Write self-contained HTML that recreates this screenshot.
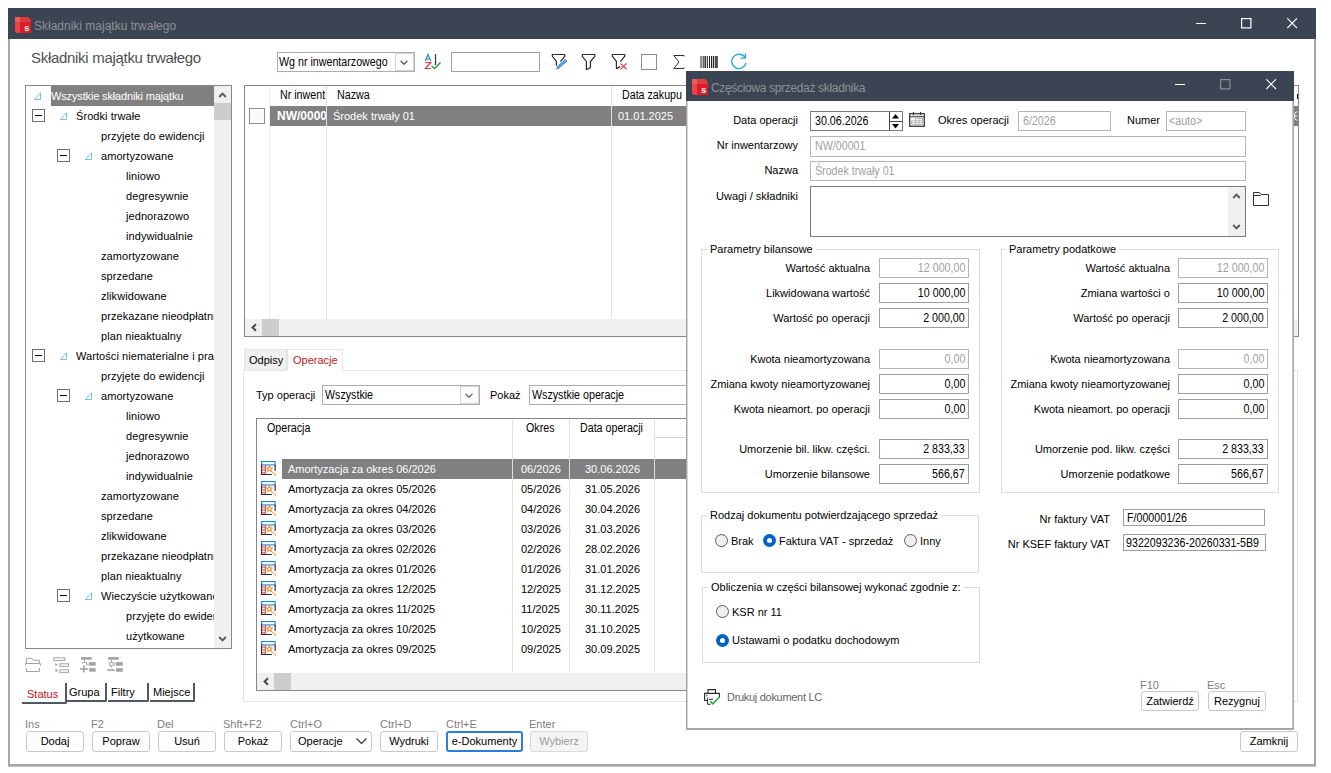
<!DOCTYPE html>
<html><head><meta charset="utf-8">
<style>
*{box-sizing:border-box;margin:0;padding:0}
html,body{width:1331px;height:773px;overflow:hidden;background:#fff;font-family:"Liberation Sans",sans-serif;font-size:11px;color:#000}
.a{position:absolute}
.t{position:absolute;white-space:nowrap;line-height:20px;height:20px}
.win{position:absolute;left:8px;top:8px;width:1308px;height:758px;background:#fff;border:2px solid #a6a6a6;border-top:none;box-shadow:0 1px 0 #c4c4c4}
.tb{position:absolute;background:#3a4452}
.ttl{position:absolute;color:#8f9194;font-size:12px;line-height:30px;white-space:nowrap;letter-spacing:-0.33px}
.logo{position:absolute;width:16px;height:16px;background:#e3262e;border-radius:0 3px 0 3px;overflow:hidden}
.logo:before{content:"";position:absolute;left:0;top:0;width:8px;height:16px;background:#ea4a50}
.logo:after{content:"";position:absolute;left:0;top:0;width:16px;height:8px;background:rgba(255,255,255,.12)}
.logo b{position:absolute;left:7px;top:5px;color:#fff;font:bold 9px/9px "Liberation Sans",sans-serif;z-index:2}
.bx{position:absolute;border:1px solid #828790;background:#fff}
.inp{position:absolute;border:1px solid #9a9ea6;background:#fff;white-space:nowrap;overflow:hidden;line-height:17px;padding:0 4px}
.cn{display:inline-block;font-size:12px;transform:scaleX(.89);transform-origin:0 50%}
.r .cn{transform-origin:100% 50%}
.dis{border-color:#b2b5bc;color:#a0a0a0}
.sel{position:absolute;background:#808080;color:#fff}
.btn{position:absolute;height:21px;border:1px solid #c8c8c8;border-radius:3px;background:#fdfdfd;text-align:center;line-height:19px;white-space:nowrap}
.lbl{position:absolute;color:#808080;white-space:nowrap;line-height:13px}
.r{text-align:right}
#tree .t{letter-spacing:.07px}
.mb{position:absolute;width:13px;height:13px;border:1px solid #6e6e6e;background:#fff}
.mb:after{content:"";position:absolute;left:2px;top:5px;width:7px;height:1px;background:#000}
.rad{position:absolute;width:13px;height:13px;border-radius:50%;border:1px solid #5a5a5a;background:#f0f0f0}
.rad.on{border:none;background:#0062c4}
.rad.on:after{content:"";position:absolute;left:4px;top:4px;width:5px;height:5px;border-radius:50%;background:#fff}
.opi{position:absolute;left:261px;width:16px;height:16px}

</style></head><body>

<!-- MAIN WINDOW -->
<div class="win"></div>
<div class="tb" style="left:8px;top:8px;width:1308px;height:31px"></div>
<svg class="a" style="left:15px;top:17px" width="16" height="16"><path d="M0 0 H13 L16 3 V16 H2 L0 14 Z" fill="#dd1d25"/><path d="M0 0 H5 V16 H2 L0 14 Z" fill="#e9444a"/><path d="M0 0 H13 L16 3 V5 H0 Z" fill="#ffffff" fill-opacity="0.13"/><text x="9.3" y="14" font-family="Liberation Sans" font-weight="bold" font-size="9" fill="#fff">s</text></svg>
<div class="ttl" style="left:34px;top:11px;letter-spacing:0">Składniki majątku trwałego</div>

<!-- heading -->
<div class="a" style="left:31px;top:49px;font-size:15px;line-height:18px;color:#4f4f4f;letter-spacing:-0.3px;white-space:nowrap">Składniki majątku trwałego</div>

<!-- toolbar -->
<div class="inp" style="left:277px;top:52px;width:138px;height:20px;border-color:#a9adb5;padding:0 0 0 1px;line-height:18px"><span class="cn">Wg nr inwentarzowego</span></div>
<div class="a" style="left:395px;top:53px;width:19px;height:18px;background:#fbfbfb;border:1px solid #d4d4d4"></div>
<svg class="a" style="left:400px;top:60px" width="9" height="6"><path d="M0.6 0.8 L4 4.2 L7.4 0.8" fill="none" stroke="#454545" stroke-width="1.2"/></svg>
<!-- AZ sort icon -->
<svg class="a" style="left:424px;top:53px" width="18" height="17"><path d="M1.3 8 L4 1.5 L6.7 8 M2.2 6 H5.8" fill="none" stroke="#2f86d0" stroke-width="1.2"/><path d="M1.2 9.5 H6.8 L1.2 15.5 H7" fill="none" stroke="#e2343c" stroke-width="1.2"/><path d="M11.5 1 V12" stroke="#383838" stroke-width="1.2"/><path d="M7.5 13 L10.5 15.5 L16.5 9.5" fill="none" stroke="#22a447" stroke-width="1.5"/></svg>
<div class="inp" style="left:451px;top:52px;width:89px;height:20px;border-color:#a0a0a0"></div>
<!-- filter icons -->
<svg class="a" style="left:551px;top:53px" width="18" height="18"><path d="M5.4 12.8 V8.3 L1.3 3.2 V1.5 H13.8 V3.2 L9.4 8.6" fill="none" stroke="#2c2c2c" stroke-width="1.2" stroke-linejoin="round"/><path d="M5.6 16.2 L6.6 13.2 L14.3 6.3 L16 8 L8.3 14.9 Z" fill="#3b8fd6" stroke="#3b8fd6" stroke-width="0.8" stroke-linejoin="round"/><path d="M7.6 13.6 L14.8 7.2" stroke="#fff" stroke-width="0.7" stroke-dasharray="0.8 1"/></svg>
<svg class="a" style="left:581px;top:53px" width="16" height="18"><path d="M1.3 1.5 H13.8 V3.3 L9.4 8.5 V14.7 L5.4 16.6 V8.5 L1.3 3.3 Z" fill="#fff" stroke="#2c2c2c" stroke-width="1.2" stroke-linejoin="round"/></svg>
<svg class="a" style="left:611px;top:53px" width="17" height="18"><path d="M9.4 8.6 L13.8 3.2 V1.5 H1.3 V3.2 L5.4 8.3 V15.6 L9.2 13.6" fill="none" stroke="#2c2c2c" stroke-width="1.2" stroke-linejoin="round"/><path d="M9.5 10.4 L15.6 16.4 M15.6 10.4 L9.5 16.4" stroke="#e8323c" stroke-width="1.2"/></svg>
<div class="a" style="left:641px;top:54px;width:16px;height:16px;border:1px solid #8a8a8a;background:#fdfdfd"></div>
<svg class="a" style="left:673px;top:55px" width="12" height="15"><path d="M11 1.5 V0.5 H0.8 L6 7 L0.8 13.5 H11 V12.5" fill="none" stroke="#303030" stroke-width="1"/></svg>
<svg class="a" style="left:700px;top:56px" width="18" height="12"><path d="M1 0 V12 M3.2 0 V12 M7.3 0 V12 M9.5 0 V12 M11.5 0 V12 M15.7 0 V12" stroke="#202020" stroke-width="1"/><path d="M5.2 0 V12 M13.5 0 V12 M17 0 V12" stroke="#202020" stroke-width="1.4"/></svg>
<svg class="a" style="left:730px;top:53px" width="18" height="18"><path d="M15 4.5 A7.2 7.2 0 1 0 16 10" fill="none" stroke="#2ba6cf" stroke-width="1.3"/><path d="M10.5 5.2 H15.3 V0.5" fill="none" stroke="#2ba6cf" stroke-width="1.3"/></svg>

<!-- tree panel -->
<div class="bx" style="left:25px;top:85px;width:207px;height:564px"></div>
<div class="a" style="left:214px;top:86px;width:17px;height:562px;background:#f0f0f0"></div>
<div class="a" style="left:214px;top:103px;width:17px;height:17px;background:#cdcdcd"></div>
<svg class="a" style="left:218px;top:92px" width="9" height="6"><path d="M1.2 5 L4.5 1.6 L7.8 5" fill="none" stroke="#585858" stroke-width="1.9"/></svg>
<svg class="a" style="left:218px;top:636px" width="9" height="6"><path d="M1.2 1 L4.5 4.4 L7.8 1" fill="none" stroke="#585858" stroke-width="1.9"/></svg>
<div id="tree" class="a" style="left:0;top:0;width:214px;height:648px;overflow:hidden">
<div class="sel" style="left:51px;top:86px;width:163px;height:20px"></div>
<svg class="a" style="left:33px;top:92px" width="9" height="8"><path d="M7.5 0.8 L7.5 7.5 L1.3 7.5 Z" fill="none" stroke="#7cbce8" stroke-width="1"/></svg>
<div class="t" style="left:51px;top:86px;color:#fff;letter-spacing:-0.15px">Wszystkie składniki majątku</div>
<div class="mb" style="left:32px;top:109px"></div>
<svg class="a" style="left:59px;top:112px" width="9" height="8"><path d="M7.5 0.8 L7.5 7.5 L1.3 7.5 Z" fill="none" stroke="#7cbce8" stroke-width="1"/></svg>
<div class="t" style="left:76px;top:106px">Środki trwałe</div>
<div class="t" style="left:101px;top:126px">przyjęte do ewidencji</div>
<div class="mb" style="left:57px;top:149px"></div>
<svg class="a" style="left:84px;top:152px" width="9" height="8"><path d="M7.5 0.8 L7.5 7.5 L1.3 7.5 Z" fill="none" stroke="#7cbce8" stroke-width="1"/></svg>
<div class="t" style="left:101px;top:146px">amortyzowane</div>
<div class="t" style="left:126px;top:166px">liniowo</div>
<div class="t" style="left:126px;top:186px">degresywnie</div>
<div class="t" style="left:126px;top:206px">jednorazowo</div>
<div class="t" style="left:126px;top:226px">indywidualnie</div>
<div class="t" style="left:101px;top:246px">zamortyzowane</div>
<div class="t" style="left:101px;top:266px">sprzedane</div>
<div class="t" style="left:101px;top:286px">zlikwidowane</div>
<div class="t" style="left:101px;top:306px">przekazane nieodpłatnie</div>
<div class="t" style="left:101px;top:326px">plan nieaktualny</div>
<div class="mb" style="left:32px;top:349px"></div>
<svg class="a" style="left:59px;top:352px" width="9" height="8"><path d="M7.5 0.8 L7.5 7.5 L1.3 7.5 Z" fill="none" stroke="#7cbce8" stroke-width="1"/></svg>
<div class="t" style="left:76px;top:346px">Wartości niematerialne i prawne</div>
<div class="t" style="left:101px;top:366px">przyjęte do ewidencji</div>
<div class="mb" style="left:57px;top:389px"></div>
<svg class="a" style="left:84px;top:392px" width="9" height="8"><path d="M7.5 0.8 L7.5 7.5 L1.3 7.5 Z" fill="none" stroke="#7cbce8" stroke-width="1"/></svg>
<div class="t" style="left:101px;top:386px">amortyzowane</div>
<div class="t" style="left:126px;top:406px">liniowo</div>
<div class="t" style="left:126px;top:426px">degresywnie</div>
<div class="t" style="left:126px;top:446px">jednorazowo</div>
<div class="t" style="left:126px;top:466px">indywidualnie</div>
<div class="t" style="left:101px;top:486px">zamortyzowane</div>
<div class="t" style="left:101px;top:506px">sprzedane</div>
<div class="t" style="left:101px;top:526px">zlikwidowane</div>
<div class="t" style="left:101px;top:546px">przekazane nieodpłatnie</div>
<div class="t" style="left:101px;top:566px">plan nieaktualny</div>
<div class="mb" style="left:57px;top:589px"></div>
<svg class="a" style="left:84px;top:592px" width="9" height="8"><path d="M7.5 0.8 L7.5 7.5 L1.3 7.5 Z" fill="none" stroke="#7cbce8" stroke-width="1"/></svg>
<div class="t" style="left:101px;top:586px">Wieczyście użytkowane</div>
<div class="t" style="left:126px;top:606px">przyjęte do ewidencji</div>
<div class="t" style="left:126px;top:626px">użytkowane</div>
</div>

<!-- tree toolbar icons -->
<svg class="a" style="left:25px;top:657px" width="17" height="16"><path d="M1.3 6.5 V1.3 H6.7 L8.3 3.3 H14.4 V6.5 M0.3 8.7 V6.5 H15.4 V8.7 M1.3 11 V14.5 H14.4 V11" fill="none" stroke="#a2a2a2" stroke-width="1"/></svg>
<svg class="a" style="left:53px;top:657px" width="17" height="16"><rect x="0.9" y="0.8" width="10.8" height="2.6" fill="none" stroke="#a2a2a2" stroke-width="1"/><rect x="6.9" y="6.8" width="8.6" height="2.6" fill="none" stroke="#a2a2a2" stroke-width="1"/><rect x="6.9" y="12.8" width="8.6" height="2.6" fill="none" stroke="#a2a2a2" stroke-width="1"/><path d="M2.3 6 L4.7 7.8 L2.3 9.6 Z M2.3 12.3 H3.8 L4.7 13.2 V14.5 H2.3 Z" fill="#a2a2a2"/></svg>
<svg class="a" style="left:80px;top:657px" width="17" height="17"><rect x="1.1" y="0.1" width="10.7" height="2.6" fill="#a2a2a2"/><rect x="9.1" y="5.1" width="6.6" height="3.6" fill="#a2a2a2"/><rect x="9.1" y="11.2" width="6.6" height="3.5" fill="#a2a2a2"/><path d="M4.5 2.7 V5.6 M2.3 6.8 V5.6 H6.7 V8.9 M6.7 7.1 H9.2" fill="none" stroke="#a2a2a2" stroke-width="0.9"/><path d="M0.1 11.9 H7.7 M3.9 8.2 V15.6" stroke="#a2a2a2" stroke-width="1.6"/></svg>
<svg class="a" style="left:107px;top:657px" width="17" height="17"><rect x="1.1" y="0.1" width="10.7" height="2.6" fill="#a2a2a2"/><rect x="9" y="5.1" width="6.8" height="3.6" fill="#a2a2a2"/><rect x="9" y="11.2" width="6.8" height="3.5" fill="#a2a2a2"/><rect x="2.6" y="5.6" width="3.8" height="2.8" fill="none" stroke="#a2a2a2" stroke-width="0.9"/><path d="M4.4 2.7 V5.6 M6.4 7 H9.1 M4.4 8.4 V10.8" fill="none" stroke="#a2a2a2" stroke-width="0.9"/><path d="M0.2 13 H7.7" stroke="#a2a2a2" stroke-width="1.6"/></svg>

<!-- bottom tabs -->
<div class="a" style="left:66px;top:683px;width:41px;height:19px;border-right:2px solid #505862;border-bottom:2px solid #505862;border-bottom-right-radius:2px"></div>
<div class="a" style="left:108px;top:683px;width:41px;height:19px;border-right:2px solid #505862;border-bottom:2px solid #505862;border-bottom-right-radius:2px"></div>
<div class="a" style="left:150px;top:683px;width:45px;height:19px;border-right:2px solid #505862;border-bottom:2px solid #505862;border-bottom-right-radius:2px"></div>
<div class="a" style="left:22px;top:683px;width:45px;height:21px;border-right:2px solid #505862;border-bottom:2px solid #505862;border-bottom-right-radius:2px"></div>
<div class="t" style="left:27px;top:684px;color:#c0141c">Status</div>
<div class="t" style="left:69px;top:682px">Grupa</div>
<div class="t" style="left:111px;top:682px">Filtry</div>
<div class="t" style="left:153px;top:682px">Miejsce</div>

<!-- upper grid -->
<div class="bx" style="left:244px;top:85px;width:1055px;height:252px"></div>
<div class="a" style="left:269px;top:86px;width:1px;height:233px;background:#ececec"></div>
<div class="a" style="left:326px;top:86px;width:1px;height:233px;background:#e4e4dc"></div>
<div class="a" style="left:611px;top:86px;width:1px;height:233px;background:#e4e4dc"></div>
<div class="t" style="left:280px;top:85px;"><span class="cn">Nr inwent</span></div>
<div class="t" style="left:337px;top:85px"><span class="cn">Nazwa</span></div>
<div class="t" style="left:622px;top:85px"><span class="cn">Data zakupu</span></div>
<div class="sel" style="left:270px;top:106px;width:1028px;height:20px"></div>
<div class="a" style="left:326px;top:106px;width:1px;height:20px;background:#e0e0e0"></div>
<div class="a" style="left:611px;top:106px;width:1px;height:20px;background:#e0e0e0"></div>
<div class="a" style="left:249px;top:108px;width:16px;height:16px;border:1px solid #8c8c8c;background:#fafafa"></div>
<div class="t" style="left:277px;top:106px;width:49px;overflow:hidden;color:#fff;font-weight:bold;font-size:12px">NW/00001</div>
<div class="t" style="left:333px;top:106px;color:#fff">Środek trwały 01</div>
<div class="t" style="left:618px;top:106px;color:#fff">01.01.2025</div>
<div class="a" style="left:245px;top:319px;width:1053px;height:17px;background:#f0f0f0"></div>
<div class="a" style="left:262px;top:319px;width:17px;height:17px;background:#cdcdcd"></div>
<svg class="a" style="left:251px;top:323px" width="6" height="9"><path d="M5 1.3 L1.6 4.5 L5 7.7" fill="none" stroke="#4a4a4a" stroke-width="2"/></svg>

<!-- middle tabs -->
<div class="a" style="left:244px;top:349px;width:43px;height:22px;background:#f0f0f0;border:1px solid #e3e3e3;border-bottom:none"></div>
<div class="a" style="left:287px;top:349px;width:56px;height:22px;background:#fff;border:1px solid #e3e3e3;border-bottom:none"></div>
<div class="t" style="left:249px;top:350px">Odpisy</div>
<div class="t" style="left:293px;top:350px;color:#c0141c">Operacje</div>
<div class="a" style="left:243px;top:370px;width:1055px;height:332px;border:1px solid #e3e3e3;border-top:1px solid #e3e3e3"></div>
<div class="a" style="left:287px;top:370px;width:55px;height:2px;background:#fff"></div>

<div class="t" style="left:256px;top:385px">Typ operacji</div>
<div class="inp" style="left:322px;top:385px;width:158px;height:20px;border-color:#a9adb5;padding-left:2px;line-height:18px"><span class="cn">Wszystkie</span></div>
<div class="a" style="left:460px;top:386px;width:19px;height:18px;background:#fbfbfb;border:1px solid #d4d4d4"></div>
<svg class="a" style="left:465px;top:393px" width="9" height="6"><path d="M0.6 0.8 L4 4.2 L7.4 0.8" fill="none" stroke="#555" stroke-width="1.1"/></svg>
<div class="t" style="left:490px;top:385px">Pokaż</div>
<div class="inp" style="left:529px;top:385px;width:300px;height:20px;border-color:#a9adb5;padding-left:2px;line-height:18px"><span class="cn">Wszystkie operacje</span></div>

<!-- operations grid -->
<div class="bx" style="left:256px;top:418px;width:1030px;height:273px"></div>
<div class="a" style="left:512px;top:419px;width:1px;height:254px;background:#e4e4dc"></div>
<div class="a" style="left:569px;top:419px;width:1px;height:254px;background:#e4e4dc"></div>
<div class="a" style="left:654px;top:419px;width:1px;height:254px;background:#e4e4dc"></div>
<div class="a" style="left:655px;top:437px;width:40px;height:1px;background:#d0d8c8"></div>
<div class="t" style="left:267px;top:418px"><span class="cn">Operacja</span></div>
<div class="t" style="left:526px;top:418px"><span class="cn">Okres</span></div>
<div class="t" style="left:580px;top:418px"><span class="cn">Data operacji</span></div>
<div class="sel" style="left:282px;top:459px;width:1003px;height:20px"></div>
<div class="a" style="left:512px;top:459px;width:1px;height:20px;background:#e0e0e0"></div>
<div class="a" style="left:569px;top:459px;width:1px;height:20px;background:#e0e0e0"></div>
<div class="a" style="left:654px;top:459px;width:1px;height:20px;background:#e0e0e0"></div>
<svg class="opi" style="top:461px" width="17" height="17" viewBox="0 0 17 17"><rect x="0.6" y="0.6" width="14.4" height="3.6" fill="#fff" stroke="#1e88d0" stroke-width="1.2"/><path d="M0.6 4 V14.4 H11.5 M15 4 V10.5" fill="none" stroke="#282828" stroke-width="1.2"/><path d="M4.6 4.5 V14 M0.6 6.5 H4.6 M0.6 9.5 H4.6 M0.6 12.5 H4.6" stroke="#e8303a" stroke-width="1"/><path d="M9 5.3 L9.9 7.2 L11.9 7.5 L10.4 8.9 L10.8 10.9 L9 9.9 L7.2 10.9 L7.6 8.9 L6.1 7.5 L8.1 7.2 Z" fill="none" stroke="#f08a2c" stroke-width="1.1"/><path d="M11 10.5 L15.8 15.3" stroke="#f08a2c" stroke-width="1.3" stroke-dasharray="1.2 0.6"/></svg>
<div class="t" style="left:288px;top:459px;color:#fff">Amortyzacja za okres 06/2026</div>
<div class="t" style="left:521px;top:459px;color:#fff">06/2026</div>
<div class="t" style="left:585px;top:459px;color:#fff">30.06.2026</div>
<svg class="opi" style="top:481px" width="17" height="17" viewBox="0 0 17 17"><rect x="0.6" y="0.6" width="14.4" height="3.6" fill="#fff" stroke="#1e88d0" stroke-width="1.2"/><path d="M0.6 4 V14.4 H11.5 M15 4 V10.5" fill="none" stroke="#282828" stroke-width="1.2"/><path d="M4.6 4.5 V14 M0.6 6.5 H4.6 M0.6 9.5 H4.6 M0.6 12.5 H4.6" stroke="#e8303a" stroke-width="1"/><path d="M9 5.3 L9.9 7.2 L11.9 7.5 L10.4 8.9 L10.8 10.9 L9 9.9 L7.2 10.9 L7.6 8.9 L6.1 7.5 L8.1 7.2 Z" fill="none" stroke="#f08a2c" stroke-width="1.1"/><path d="M11 10.5 L15.8 15.3" stroke="#f08a2c" stroke-width="1.3" stroke-dasharray="1.2 0.6"/></svg>
<div class="t" style="left:288px;top:479px;color:#000">Amortyzacja za okres 05/2026</div>
<div class="t" style="left:521px;top:479px;color:#000">05/2026</div>
<div class="t" style="left:585px;top:479px;color:#000">31.05.2026</div>
<svg class="opi" style="top:501px" width="17" height="17" viewBox="0 0 17 17"><rect x="0.6" y="0.6" width="14.4" height="3.6" fill="#fff" stroke="#1e88d0" stroke-width="1.2"/><path d="M0.6 4 V14.4 H11.5 M15 4 V10.5" fill="none" stroke="#282828" stroke-width="1.2"/><path d="M4.6 4.5 V14 M0.6 6.5 H4.6 M0.6 9.5 H4.6 M0.6 12.5 H4.6" stroke="#e8303a" stroke-width="1"/><path d="M9 5.3 L9.9 7.2 L11.9 7.5 L10.4 8.9 L10.8 10.9 L9 9.9 L7.2 10.9 L7.6 8.9 L6.1 7.5 L8.1 7.2 Z" fill="none" stroke="#f08a2c" stroke-width="1.1"/><path d="M11 10.5 L15.8 15.3" stroke="#f08a2c" stroke-width="1.3" stroke-dasharray="1.2 0.6"/></svg>
<div class="t" style="left:288px;top:499px;color:#000">Amortyzacja za okres 04/2026</div>
<div class="t" style="left:521px;top:499px;color:#000">04/2026</div>
<div class="t" style="left:585px;top:499px;color:#000">30.04.2026</div>
<svg class="opi" style="top:521px" width="17" height="17" viewBox="0 0 17 17"><rect x="0.6" y="0.6" width="14.4" height="3.6" fill="#fff" stroke="#1e88d0" stroke-width="1.2"/><path d="M0.6 4 V14.4 H11.5 M15 4 V10.5" fill="none" stroke="#282828" stroke-width="1.2"/><path d="M4.6 4.5 V14 M0.6 6.5 H4.6 M0.6 9.5 H4.6 M0.6 12.5 H4.6" stroke="#e8303a" stroke-width="1"/><path d="M9 5.3 L9.9 7.2 L11.9 7.5 L10.4 8.9 L10.8 10.9 L9 9.9 L7.2 10.9 L7.6 8.9 L6.1 7.5 L8.1 7.2 Z" fill="none" stroke="#f08a2c" stroke-width="1.1"/><path d="M11 10.5 L15.8 15.3" stroke="#f08a2c" stroke-width="1.3" stroke-dasharray="1.2 0.6"/></svg>
<div class="t" style="left:288px;top:519px;color:#000">Amortyzacja za okres 03/2026</div>
<div class="t" style="left:521px;top:519px;color:#000">03/2026</div>
<div class="t" style="left:585px;top:519px;color:#000">31.03.2026</div>
<svg class="opi" style="top:541px" width="17" height="17" viewBox="0 0 17 17"><rect x="0.6" y="0.6" width="14.4" height="3.6" fill="#fff" stroke="#1e88d0" stroke-width="1.2"/><path d="M0.6 4 V14.4 H11.5 M15 4 V10.5" fill="none" stroke="#282828" stroke-width="1.2"/><path d="M4.6 4.5 V14 M0.6 6.5 H4.6 M0.6 9.5 H4.6 M0.6 12.5 H4.6" stroke="#e8303a" stroke-width="1"/><path d="M9 5.3 L9.9 7.2 L11.9 7.5 L10.4 8.9 L10.8 10.9 L9 9.9 L7.2 10.9 L7.6 8.9 L6.1 7.5 L8.1 7.2 Z" fill="none" stroke="#f08a2c" stroke-width="1.1"/><path d="M11 10.5 L15.8 15.3" stroke="#f08a2c" stroke-width="1.3" stroke-dasharray="1.2 0.6"/></svg>
<div class="t" style="left:288px;top:539px;color:#000">Amortyzacja za okres 02/2026</div>
<div class="t" style="left:521px;top:539px;color:#000">02/2026</div>
<div class="t" style="left:585px;top:539px;color:#000">28.02.2026</div>
<svg class="opi" style="top:561px" width="17" height="17" viewBox="0 0 17 17"><rect x="0.6" y="0.6" width="14.4" height="3.6" fill="#fff" stroke="#1e88d0" stroke-width="1.2"/><path d="M0.6 4 V14.4 H11.5 M15 4 V10.5" fill="none" stroke="#282828" stroke-width="1.2"/><path d="M4.6 4.5 V14 M0.6 6.5 H4.6 M0.6 9.5 H4.6 M0.6 12.5 H4.6" stroke="#e8303a" stroke-width="1"/><path d="M9 5.3 L9.9 7.2 L11.9 7.5 L10.4 8.9 L10.8 10.9 L9 9.9 L7.2 10.9 L7.6 8.9 L6.1 7.5 L8.1 7.2 Z" fill="none" stroke="#f08a2c" stroke-width="1.1"/><path d="M11 10.5 L15.8 15.3" stroke="#f08a2c" stroke-width="1.3" stroke-dasharray="1.2 0.6"/></svg>
<div class="t" style="left:288px;top:559px;color:#000">Amortyzacja za okres 01/2026</div>
<div class="t" style="left:521px;top:559px;color:#000">01/2026</div>
<div class="t" style="left:585px;top:559px;color:#000">31.01.2026</div>
<svg class="opi" style="top:581px" width="17" height="17" viewBox="0 0 17 17"><rect x="0.6" y="0.6" width="14.4" height="3.6" fill="#fff" stroke="#1e88d0" stroke-width="1.2"/><path d="M0.6 4 V14.4 H11.5 M15 4 V10.5" fill="none" stroke="#282828" stroke-width="1.2"/><path d="M4.6 4.5 V14 M0.6 6.5 H4.6 M0.6 9.5 H4.6 M0.6 12.5 H4.6" stroke="#e8303a" stroke-width="1"/><path d="M9 5.3 L9.9 7.2 L11.9 7.5 L10.4 8.9 L10.8 10.9 L9 9.9 L7.2 10.9 L7.6 8.9 L6.1 7.5 L8.1 7.2 Z" fill="none" stroke="#f08a2c" stroke-width="1.1"/><path d="M11 10.5 L15.8 15.3" stroke="#f08a2c" stroke-width="1.3" stroke-dasharray="1.2 0.6"/></svg>
<div class="t" style="left:288px;top:579px;color:#000">Amortyzacja za okres 12/2025</div>
<div class="t" style="left:521px;top:579px;color:#000">12/2025</div>
<div class="t" style="left:585px;top:579px;color:#000">31.12.2025</div>
<svg class="opi" style="top:601px" width="17" height="17" viewBox="0 0 17 17"><rect x="0.6" y="0.6" width="14.4" height="3.6" fill="#fff" stroke="#1e88d0" stroke-width="1.2"/><path d="M0.6 4 V14.4 H11.5 M15 4 V10.5" fill="none" stroke="#282828" stroke-width="1.2"/><path d="M4.6 4.5 V14 M0.6 6.5 H4.6 M0.6 9.5 H4.6 M0.6 12.5 H4.6" stroke="#e8303a" stroke-width="1"/><path d="M9 5.3 L9.9 7.2 L11.9 7.5 L10.4 8.9 L10.8 10.9 L9 9.9 L7.2 10.9 L7.6 8.9 L6.1 7.5 L8.1 7.2 Z" fill="none" stroke="#f08a2c" stroke-width="1.1"/><path d="M11 10.5 L15.8 15.3" stroke="#f08a2c" stroke-width="1.3" stroke-dasharray="1.2 0.6"/></svg>
<div class="t" style="left:288px;top:599px;color:#000">Amortyzacja za okres 11/2025</div>
<div class="t" style="left:521px;top:599px;color:#000">11/2025</div>
<div class="t" style="left:585px;top:599px;color:#000">30.11.2025</div>
<svg class="opi" style="top:621px" width="17" height="17" viewBox="0 0 17 17"><rect x="0.6" y="0.6" width="14.4" height="3.6" fill="#fff" stroke="#1e88d0" stroke-width="1.2"/><path d="M0.6 4 V14.4 H11.5 M15 4 V10.5" fill="none" stroke="#282828" stroke-width="1.2"/><path d="M4.6 4.5 V14 M0.6 6.5 H4.6 M0.6 9.5 H4.6 M0.6 12.5 H4.6" stroke="#e8303a" stroke-width="1"/><path d="M9 5.3 L9.9 7.2 L11.9 7.5 L10.4 8.9 L10.8 10.9 L9 9.9 L7.2 10.9 L7.6 8.9 L6.1 7.5 L8.1 7.2 Z" fill="none" stroke="#f08a2c" stroke-width="1.1"/><path d="M11 10.5 L15.8 15.3" stroke="#f08a2c" stroke-width="1.3" stroke-dasharray="1.2 0.6"/></svg>
<div class="t" style="left:288px;top:619px;color:#000">Amortyzacja za okres 10/2025</div>
<div class="t" style="left:521px;top:619px;color:#000">10/2025</div>
<div class="t" style="left:585px;top:619px;color:#000">31.10.2025</div>
<svg class="opi" style="top:641px" width="17" height="17" viewBox="0 0 17 17"><rect x="0.6" y="0.6" width="14.4" height="3.6" fill="#fff" stroke="#1e88d0" stroke-width="1.2"/><path d="M0.6 4 V14.4 H11.5 M15 4 V10.5" fill="none" stroke="#282828" stroke-width="1.2"/><path d="M4.6 4.5 V14 M0.6 6.5 H4.6 M0.6 9.5 H4.6 M0.6 12.5 H4.6" stroke="#e8303a" stroke-width="1"/><path d="M9 5.3 L9.9 7.2 L11.9 7.5 L10.4 8.9 L10.8 10.9 L9 9.9 L7.2 10.9 L7.6 8.9 L6.1 7.5 L8.1 7.2 Z" fill="none" stroke="#f08a2c" stroke-width="1.1"/><path d="M11 10.5 L15.8 15.3" stroke="#f08a2c" stroke-width="1.3" stroke-dasharray="1.2 0.6"/></svg>
<div class="t" style="left:288px;top:639px;color:#000">Amortyzacja za okres 09/2025</div>
<div class="t" style="left:521px;top:639px;color:#000">09/2025</div>
<div class="t" style="left:585px;top:639px;color:#000">30.09.2025</div>
<div class="a" style="left:257px;top:673px;width:1028px;height:17px;background:#f0f0f0"></div>
<div class="a" style="left:274px;top:673px;width:17px;height:17px;background:#cdcdcd"></div>
<svg class="a" style="left:263px;top:677px" width="6" height="9"><path d="M5 1.3 L1.6 4.5 L5 7.7" fill="none" stroke="#4a4a4a" stroke-width="2"/></svg>

<!-- bottom buttons -->
<div class="lbl" style="left:25px;top:718px">Ins</div>
<div class="lbl" style="left:91px;top:718px">F2</div>
<div class="lbl" style="left:157px;top:718px">Del</div>
<div class="lbl" style="left:223px;top:718px">Shft+F2</div>
<div class="lbl" style="left:290px;top:718px">Ctrl+O</div>
<div class="lbl" style="left:380px;top:718px">Ctrl+D</div>
<div class="lbl" style="left:446px;top:718px">Ctrl+E</div>
<div class="lbl" style="left:529px;top:718px">Enter</div>
<div class="btn" style="left:26px;top:731px;width:58px">Dodaj</div>
<div class="btn" style="left:92px;top:731px;width:58px">Popraw</div>
<div class="btn" style="left:158px;top:731px;width:58px">Usuń</div>
<div class="btn" style="left:224px;top:731px;width:58px">Pokaż</div>
<div class="btn" style="left:290px;top:731px;width:82px;text-align:left;padding-left:7px">Operacje</div>
<svg class="a" style="left:356px;top:738px" width="11" height="7"><path d="M0.5 0.5 L5.5 5.5 L10.5 0.5" fill="none" stroke="#303030" stroke-width="1.2"/></svg>
<div class="btn" style="left:380px;top:731px;width:58px">Wydruki</div>
<div class="btn" style="left:446px;top:731px;width:77px;border:2px solid #2c7fd4;line-height:16px">e-Dokumenty</div>
<div class="btn" style="left:530px;top:731px;width:58px;color:#9c9c9c;background:#f4f4f4;border-color:#dadada">Wybierz</div>
<div class="btn" style="left:1240px;top:731px;width:58px">Zamknij</div>

<!-- main window controls -->
<svg class="a" style="left:1196px;top:18px" width="11" height="11"><path d="M0 5.5 H10" stroke="#fff" stroke-width="1"/></svg>
<svg class="a" style="left:1241px;top:18px" width="11" height="11"><rect x="0.6" y="0.6" width="9.3" height="9.3" fill="none" stroke="#fff" stroke-width="1.2"/></svg>
<svg class="a" style="left:1287px;top:18px" width="11" height="11"><path d="M0.3 0.3 L10 10 M10 0.3 L0.3 10" stroke="#fff" stroke-width="1.1"/></svg>

<div class="a" style="left:1297px;top:94px;width:1px;height:5px;background:#000"></div>
<svg class="a" style="left:1294px;top:111px" width="4" height="10"><path d="M3.5 1 H2 Q0.6 1 0.6 5 Q0.6 9 2 9 H3.5 M0.6 5 H3.5" fill="none" stroke="#f4f4f4" stroke-width="1"/></svg>
<!-- DIALOG -->
<div class="a" style="left:686px;top:71px;width:608px;height:659px;background:#fff;border:1px solid #a6a6a6;border-top:none;border-bottom:2px solid #a6a6a6;box-shadow:inset 1px 0 0 #d4d4d4,inset -1px 0 0 #c8c8c8"></div>
<div class="tb" style="left:686px;top:71px;width:608px;height:30px"></div>
<svg class="a" style="left:692px;top:79px" width="16" height="16"><path d="M0 0 H13 L16 3 V16 H2 L0 14 Z" fill="#dd1d25"/><path d="M0 0 H5 V16 H2 L0 14 Z" fill="#e9444a"/><path d="M0 0 H13 L16 3 V5 H0 Z" fill="#ffffff" fill-opacity="0.13"/><text x="9.3" y="14" font-family="Liberation Sans" font-weight="bold" font-size="9" fill="#fff">s</text></svg>
<div class="ttl" style="left:711px;top:73px">Częściowa sprzedaż składnika</div>
<svg class="a" style="left:1175px;top:79px" width="11" height="11"><path d="M0 5.5 H10" stroke="#fff" stroke-width="1"/></svg>
<svg class="a" style="left:1220px;top:79px" width="11" height="11"><rect x="0.6" y="0.6" width="9.3" height="9.3" fill="none" stroke="#8a8f96" stroke-width="1.2"/></svg>
<svg class="a" style="left:1266px;top:79px" width="11" height="11"><path d="M0.3 0.3 L10 10 M10 0.3 L0.3 10" stroke="#fff" stroke-width="1.1"/></svg>

<div class="t r" style="left:600px;width:198px;top:110px">Data operacji</div>
<div class="inp" style="left:810px;top:111px;width:93px;height:20px;border-color:#7a7a7a;line-height:18px;padding-left:4px"><span class="cn">30.06.2026</span></div>
<div class="a" style="left:889px;top:112px;width:1px;height:18px;background:#3c4858"></div>
<div class="a" style="left:890px;top:121px;width:12px;height:1px;background:#3c4858"></div>
<svg class="a" style="left:891px;top:113px" width="10" height="16"><path d="M1 5.5 L4.5 1 L8 5.5 Z" fill="#000"/><path d="M1 11 L8 11 L4.5 15.5 Z" fill="#000"/></svg>
<svg class="a" style="left:909px;top:112px" width="16" height="15"><rect x="0.7" y="1.7" width="14.6" height="12.6" fill="#fff" stroke="#383838" stroke-width="1.3"/><rect x="1.3" y="2.3" width="13.4" height="2.5" fill="#d4d4d4"/><path d="M0.7 4.8 H15.3" stroke="#383838" stroke-width="1"/><path d="M4.5 0 V3 M11.5 0 V3" stroke="#383838" stroke-width="1.2"/><path d="M6.5 6.5 H13.5 V12.5 H2.5 V8.8 H6.5 Z M2.5 10.7 H13.5 M6.5 8.8 H13.5 M6.5 6.5 V12.5 M10 6.5 V12.5" fill="none" stroke="#b4b4b4" stroke-width="0.9"/></svg>
<div class="t" style="left:938px;top:110px">Okres operacji</div>
<div class="inp dis" style="left:1018px;top:111px;width:93px;height:20px;line-height:18px"><span class="cn">6/2026</span></div>
<div class="t" style="left:1127px;top:110px">Numer</div>
<div class="inp dis" style="left:1166px;top:111px;width:80px;height:20px;line-height:18px;padding-left:2px"><span class="cn">&lt;auto&gt;</span></div>

<div class="t r" style="left:600px;width:198px;top:135px">Nr inwentarzowy</div>
<div class="inp dis" style="left:810px;top:136px;width:436px;height:21px;line-height:19px"><span class="cn">NW/00001</span></div>
<div class="t r" style="left:600px;width:198px;top:160px">Nazwa</div>
<div class="inp dis" style="left:810px;top:161px;width:436px;height:20px;line-height:18px"><span class="cn">Środek trwały 01</span></div>
<div class="t r" style="left:600px;width:198px;top:186px">Uwagi / składniki</div>
<div class="inp" style="left:810px;top:186px;width:436px;height:51px;border-color:#7a7a7a"></div>
<div class="a" style="left:1228px;top:187px;width:17px;height:49px;background:#f0f0f0"></div>
<svg class="a" style="left:1232px;top:193px" width="9" height="6"><path d="M1.2 5 L4.5 1.6 L7.8 5" fill="none" stroke="#585858" stroke-width="1.9"/></svg>
<svg class="a" style="left:1232px;top:224px" width="9" height="6"><path d="M1.2 1 L4.5 4.4 L7.8 1" fill="none" stroke="#585858" stroke-width="1.9"/></svg>
<svg class="a" style="left:1253px;top:192px" width="16" height="14"><path d="M0.5 13.5 V0.5 H6.5 L8.5 2.5 H15.5 V13.5 Z M0.5 3.5 H7.5 L8.5 2.5" fill="#fdfdfd" stroke="#303030" stroke-width="1"/></svg>

<!-- group boxes -->
<div class="a" style="left:701px;top:249px;width:279px;height:244px;border:1px solid #dcdcdc"></div>
<div class="t" style="left:707px;top:239px;background:#fff;padding:0 3px">Parametry bilansowe</div>
<div class="a" style="left:1001px;top:249px;width:278px;height:244px;border:1px solid #dcdcdc"></div>
<div class="t" style="left:1006px;top:239px;background:#fff;padding:0 3px">Parametry podatkowe</div>
<div class="t r" style="left:700px;width:170px;top:258px">Wartość aktualna</div>
<div class="inp r dis" style="left:879px;top:258px;width:90px;height:20px;line-height:18px;padding-right:3px"><span class="cn">12 000,00</span></div>
<div class="t r" style="left:1000px;width:170px;top:258px">Wartość aktualna</div>
<div class="inp r dis" style="left:1178px;top:258px;width:90px;height:20px;line-height:18px;padding-right:3px"><span class="cn">12 000,00</span></div>
<div class="t r" style="left:700px;width:170px;top:283px">Likwidowana wartość</div>
<div class="inp r" style="left:879px;top:283px;width:90px;height:20px;line-height:18px;padding-right:3px"><span class="cn">10 000,00</span></div>
<div class="t r" style="left:1000px;width:170px;top:283px">Zmiana wartości o</div>
<div class="inp r" style="left:1178px;top:283px;width:90px;height:20px;line-height:18px;padding-right:3px"><span class="cn">10 000,00</span></div>
<div class="t r" style="left:700px;width:170px;top:308px">Wartość po operacji</div>
<div class="inp r" style="left:879px;top:308px;width:90px;height:20px;line-height:18px;padding-right:3px"><span class="cn">2 000,00</span></div>
<div class="t r" style="left:1000px;width:170px;top:308px">Wartość po operacji</div>
<div class="inp r" style="left:1178px;top:308px;width:90px;height:20px;line-height:18px;padding-right:3px"><span class="cn">2 000,00</span></div>
<div class="t r" style="left:700px;width:170px;top:349px">Kwota nieamortyzowana</div>
<div class="inp r dis" style="left:879px;top:349px;width:90px;height:20px;line-height:18px;padding-right:3px"><span class="cn">0,00</span></div>
<div class="t r" style="left:1000px;width:170px;top:349px">Kwota nieamortyzowana</div>
<div class="inp r dis" style="left:1178px;top:349px;width:90px;height:20px;line-height:18px;padding-right:3px"><span class="cn">0,00</span></div>
<div class="t r" style="left:700px;width:170px;top:374px">Zmiana kwoty nieamortyzowanej</div>
<div class="inp r" style="left:879px;top:374px;width:90px;height:20px;line-height:18px;padding-right:3px"><span class="cn">0,00</span></div>
<div class="t r" style="left:1000px;width:170px;top:374px">Zmiana kwoty nieamortyzowanej</div>
<div class="inp r" style="left:1178px;top:374px;width:90px;height:20px;line-height:18px;padding-right:3px"><span class="cn">0,00</span></div>
<div class="t r" style="left:700px;width:170px;top:399px">Kwota nieamort. po operacji</div>
<div class="inp r" style="left:879px;top:399px;width:90px;height:20px;line-height:18px;padding-right:3px"><span class="cn">0,00</span></div>
<div class="t r" style="left:1000px;width:170px;top:399px">Kwota nieamort. po operacji</div>
<div class="inp r" style="left:1178px;top:399px;width:90px;height:20px;line-height:18px;padding-right:3px"><span class="cn">0,00</span></div>
<div class="t r" style="left:700px;width:170px;top:439px">Umorzenie bil. likw. części.</div>
<div class="inp r" style="left:879px;top:439px;width:90px;height:20px;line-height:18px;padding-right:3px"><span class="cn">2 833,33</span></div>
<div class="t r" style="left:1000px;width:170px;top:439px">Umorzenie pod. likw. części</div>
<div class="inp r" style="left:1178px;top:439px;width:90px;height:20px;line-height:18px;padding-right:3px"><span class="cn">2 833,33</span></div>
<div class="t r" style="left:700px;width:170px;top:464px">Umorzenie bilansowe</div>
<div class="inp r" style="left:879px;top:464px;width:90px;height:20px;line-height:18px;padding-right:3px"><span class="cn">566,67</span></div>
<div class="t r" style="left:1000px;width:170px;top:464px">Umorzenie podatkowe</div>
<div class="inp r" style="left:1178px;top:464px;width:90px;height:20px;line-height:18px;padding-right:3px"><span class="cn">566,67</span></div>

<div class="a" style="left:701px;top:515px;width:278px;height:58px;border:1px solid #dcdcdc"></div>
<div class="t" style="left:707px;top:505px;background:#fff;padding:0 3px">Rodzaj dokumentu potwierdzającego sprzedaż</div>
<div class="rad" style="left:715px;top:534px"></div><div class="t" style="left:731px;top:531px">Brak</div>
<div class="rad on" style="left:763px;top:534px"></div><div class="t" style="left:779px;top:531px">Faktura VAT - sprzedaż</div>
<div class="rad" style="left:904px;top:534px"></div><div class="t" style="left:920px;top:531px">Inny</div>

<div class="a" style="left:702px;top:587px;width:278px;height:76px;border:1px solid #dcdcdc"></div>
<div class="t" style="left:708px;top:577px;background:#fff;padding:0 3px">Obliczenia w części bilansowej wykonać zgodnie z:</div>
<div class="rad" style="left:716px;top:605px"></div><div class="t" style="left:732px;top:602px">KSR nr 11</div>
<div class="rad on" style="left:716px;top:634px"></div><div class="t" style="left:732px;top:630px">Ustawami o podatku dochodowym</div>

<div class="t r" style="left:900px;width:210px;top:509px">Nr faktury VAT</div>
<div class="inp" style="left:1123px;top:509px;width:142px;height:17px;line-height:17px;padding-left:3px"><span class="cn">F/000001/26</span></div>
<div class="t r" style="left:900px;width:210px;top:534px">Nr KSEF faktury VAT</div>
<div class="inp" style="left:1123px;top:534px;width:143px;height:17px;line-height:17px;padding-left:2px"><span class="cn">9322093236-20260331-5B9</span></div>

<svg class="a" style="left:704px;top:689px" width="17" height="17"><path d="M4 4 V0.6 H11.5 V4 M3.6 11.5 H0.6 V4.4 H15.4 V8.5" fill="none" stroke="#2a2a2a" stroke-width="1.1"/><path d="M3.6 8.6 V15.3 H6.5 M5 10.3 H9" fill="none" stroke="#2a2a2a" stroke-width="1"/><path d="M2 6.6 H3.6" stroke="#2f7fd0" stroke-width="1.1"/><path d="M6.3 12.2 L8.6 14.8 L15.6 8" fill="none" stroke="#25a84a" stroke-width="1.6"/></svg>
<div class="t" style="left:727px;top:687px;color:#646464;letter-spacing:-0.3px">Drukuj dokument LC</div>

<div class="lbl" style="left:1140px;top:679px">F10</div>
<div class="lbl" style="left:1207px;top:679px">Esc</div>
<div class="btn" style="left:1141px;top:691px;width:58px;height:20px;line-height:18px">Zatwierdź</div>
<div class="btn" style="left:1208px;top:691px;width:58px;height:20px;line-height:18px">Rezygnuj</div>

</body></html>
